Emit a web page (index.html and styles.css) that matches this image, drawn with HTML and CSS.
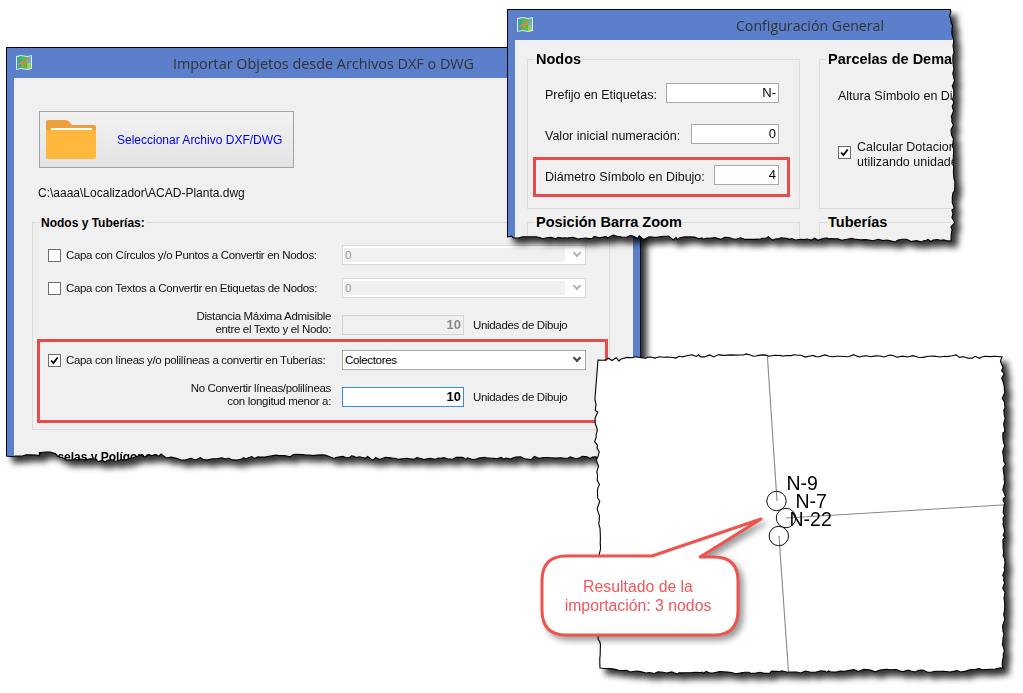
FILE: index.html
```html
<!DOCTYPE html>
<html lang="es">
<head>
    <meta charset="UTF-8">
    <meta name="viewport" content="width=device-width, initial-scale=1.0">
    <title>Importar Objetos desde Archivos DXF o DWG</title>
    <link rel="stylesheet" href="styles.css">
</head>
<body>
    <div class="desktop">

        <!-- ventana importar -->
        <section class="win win-import" id="winImport">
            <div class="win-clip">
                <div class="titlebar">
                    <svg class="app-icon" viewBox="0 0 16 15"><use href="#mapIcon"></use></svg>
                    <span class="title">Importar Objetos desde Archivos DXF o DWG</span>
                </div>
                <div class="client">
                    <div class="file-button">
                        <svg class="folder" viewBox="0 0 50 39">
                            <path d="M2 0H20Q22 0 23.500 2L26 5H48Q50 5 50 7V12H0V2Q0 0 2 0Z" fill="#ee9f3e"/>
                            <rect x="5" y="8" width="41" height="3" fill="#fff"/>
                            <path d="M0 10H50V37Q50 39 48 39H2Q0 39 0 37Z" fill="#ffb73e"/>
                        </svg>
                        <span class="file-button-text">Seleccionar Archivo DXF/DWG</span>
                    </div>
                    <p class="file-path">C:\aaaa\Localizador\ACAD-Planta.dwg</p>

                    <div class="group group-nodes">
                        <h3 class="legend-small">Nodos y Tuberías:</h3>
                        <div class="row row-1">
                            <span class="check"></span>
                            <span class="row-label">Capa con Círculos y/o Puntos a Convertir en Nodos:</span>
                            <div class="combo combo-off"><span>0</span></div>
                        </div>
                        <div class="row row-2">
                            <span class="check"></span>
                            <span class="row-label">Capa con Textos a Convertir en Etiquetas de Nodos:</span>
                            <div class="combo combo-off"><span>0</span></div>
                        </div>
                        <div class="row row-3">
                            <span class="row-label right">Distancia Máxima Admisible<br>entre el Texto y el Nodo:</span>
                            <div class="num num-off">10</div>
                            <span class="unit">Unidades de Dibujo</span>
                        </div>
                        <div class="row row-4">
                            <span class="check check-on">
                                <svg viewBox="0 0 13 13"><path d="M2.500 6.500L5.200 9.500L10.300 3" fill="none" stroke="#000" stroke-width="2.200"/></svg>
                            </span>
                            <span class="row-label">Capa con líneas y/o polilíneas a convertir en Tuberías:</span>
                            <div class="combo"><span>Colectores</span></div>
                        </div>
                        <div class="row row-5">
                            <span class="row-label right">No Convertir líneas/polilíneas<br>con longitud menor a:</span>
                            <div class="num num-focus">10</div>
                            <span class="unit">Unidades de Dibujo</span>
                        </div>
                        <div class="mark mark-pipes"></div>
                    </div>

                    <h3 class="legend-small legend-next">Parcelas y Polígonos:</h3>
                </div>
            </div>
        </section>

        <!-- ventana configuracion -->
        <section class="win win-config" id="winConfig">
            <div class="win-clip">
                <div class="titlebar">
                    <svg class="app-icon" viewBox="0 0 16 15"><use href="#mapIcon"></use></svg>
                    <span class="title">Configuración General</span>
                </div>
                <div class="client client-config">
                    <div class="group group-big">
                        <h3 class="legend-big">Nodos</h3>
                        <div class="field field-1">
                            <span>Prefijo en Etiquetas:</span>
                            <div class="num num-wide">N-</div>
                        </div>
                        <div class="field field-2">
                            <span>Valor inicial numeración:</span>
                            <div class="num num-mid">0</div>
                        </div>
                        <div class="field field-3">
                            <span>Diámetro Símbolo en Dibujo:</span>
                            <div class="num num-short">4</div>
                        </div>
                        <div class="mark mark-diameter"></div>
                    </div>
                    <div class="group group-big">
                        <h3 class="legend-big">Parcelas de Demanda</h3>
                        <div class="field field-height"><span>Altura Símbolo en Dibujo:</span></div>
                        <div class="field-check">
                            <span class="check check-on">
                                <svg viewBox="0 0 13 13"><path d="M2.500 6.500L5.200 9.500L10.300 3" fill="none" stroke="#000" stroke-width="2.200"/></svg>
                            </span>
                            <span>Calcular Dotaciones<br>utilizando unidades</span>
                        </div>
                    </div>
                    <div class="group group-big">
                        <h3 class="legend-big">Posición Barra Zoom</h3>
                    </div>
                    <div class="group group-big">
                        <h3 class="legend-big">Tuberías</h3>
                    </div>
                </div>
            </div>
        </section>

        <!-- dibujo resultante -->
        <section class="win win-drawing" id="winDrawing">
            <div class="win-clip">
                <svg class="drawing" viewBox="590 348 425 335">
                    <g class="pipe">
                        <line x1="767" y1="350" x2="777" y2="501"/>
                        <line x1="786" y1="518" x2="1010" y2="504.500"/>
                        <line x1="779" y1="536" x2="789" y2="680"/>
                    </g>
                    <g class="node">
                        <circle cx="776.500" cy="501" r="9.700"/>
                        <circle cx="786" cy="518" r="9.700"/>
                        <circle cx="778.800" cy="536" r="9.700"/>
                    </g>
                    <text x="786.500" y="490">N-9</text>
                    <text x="795.500" y="508">N-7</text>
                    <text x="789.500" y="526">N-22</text>
                </svg>
            </div>
        </section>

        <div class="callout">
            <svg class="callout-shape" viewBox="535 510 235 132">
                <path d="M566 556H652L761 519L700 557H714Q738 557 738 581V610Q738 635 714 635H566Q542 635 542 610V581Q542 556 566 556Z"/>
            </svg>
            <p class="callout-text">Resultado de la<br>importación: 3 nodos</p>
        </div>
    </div>

    <svg class="defs" width="0" height="0">
        <symbol id="mapIcon" viewBox="0 0 16 15">
            <path d="M0 1L5 0L11 1L16 0V14L11 15L5 14L0 15Z" fill="#d7ecec"/>
            <path d="M1 2L5 1V13L1 14Z" fill="#3aa6a0"/>
            <path d="M5 1L11 2V14L5 13Z" fill="#58b84f"/>
            <path d="M11 2L15 1V8L11 9Z" fill="#57b9c9"/>
            <path d="M11 9L15 8V13L11 14Z" fill="#9ccb5a"/>
            <path d="M2 10L6 7L9 8L11 4L14 5M6 7L7 12" fill="none" stroke="#ef7f3a" stroke-width="1.400"/>
        </symbol>
    </svg>

    <script src="torn.js"></script>
</body>
</html>
```

FILE: styles.css
```css
html, body {
    margin: 0;
    padding: 0;
    background-color: #fff;
}
body {
    font-family: "Liberation Sans", Arial, sans-serif;
    font-size: 12px;
    color: #111;
}
.defs {
    position: absolute;
}
.desktop {
    position: relative;
    width: 1023px;
    height: 693px;
    overflow: hidden;
}

/* ventanas */
.win {
    position: absolute;
    filter: drop-shadow(6px 6px 3px rgba(0, 0, 0, 0.8));
}
.win-import {
    left: 6px;
    top: 47px;
    width: 635px;
    height: 425px;
}
.win-config {
    left: 507px;
    top: 9px;
    width: 460px;
    height: 240px;
}
.win-drawing {
    left: 590px;
    top: 348px;
    width: 425px;
    height: 335px;
}
.win-clip {
    width: 100%;
    height: 100%;
    box-sizing: border-box;
    background-color: #5b7fcb;
    border: 1px solid #0a0a14;
    overflow: hidden;
}
.win-drawing .win-clip {
    background-color: #fff;
    border: 0;
}
.edge {
    position: absolute;
    left: 0;
    top: 0;
    width: 100%;
    height: 100%;
    overflow: visible;
    pointer-events: none;
}
.edge path {
    fill: none;
    stroke: #000;
    stroke-width: 1.100;
}
.titlebar {
    display: flex;
    align-items: center;
    justify-content: center;
    position: relative;
    height: 30px;
}
.app-icon {
    position: absolute;
    left: 9px;
    top: 7px;
    width: 16px;
    height: 15px;
}
.title {
    font-family: "Open Sans", sans-serif;
    font-size: 14.400px;
    color: #333;
}
.win-import .title {
    margin-left: 0;
}
.win-config .title {
    margin-left: 146px;
    font-size: 14.200px;
}
.client {
    margin: 0 7px;
    padding: 33px 0 0 25px;
    height: 430px;
    background-color: #f0f0f0;
}

/* boton archivo */
.file-button {
    display: flex;
    align-items: center;
    box-sizing: border-box;
    width: 255px;
    height: 57px;
    padding: 0 6px;
    border: 1px solid #a3a3a3;
    background: linear-gradient(#f2f2f2, #e4e4e4);
}
.folder {
    width: 50px;
    height: 39px;
    margin-right: 21px;
}
.file-button-text {
    color: #0000f0;
    font-size: 12px;
}
.file-path {
    margin: 18px 0 0 -1px;
    font-size: 12px;
    line-height: 14px;
}

/* grupos */
.group {
    position: relative;
    box-sizing: border-box;
    border: 1px solid #dcdcdc;
}
.group-nodes {
    width: 578px;
    height: 208px;
    margin: 22px 0 0 -7px;
    padding-left: 15px;
}
.legend-small {
    position: absolute;
    top: -7px;
    left: 7px;
    margin: 0;
    padding: 0 1px;
    font-size: 12px;
    line-height: 14px;
    color: #000;
    background-color: #f0f0f0;
}
.legend-next {
    position: static;
    margin: 20px 0 0 -2px;
    display: inline-block;
}
.legend-big {
    position: absolute;
    top: -9px;
    left: 7px;
    margin: 0;
    padding: 0 1px;
    font-size: 14.500px;
    line-height: 17px;
    color: #000;
    background-color: #f0f0f0;
}

/* filas del grupo */
.row {
    display: flex;
    align-items: center;
    height: 20px;
    font-size: 11.500px;
    letter-spacing: -0.33px;
}
.row-1 { margin-top: 22px; }
.row-2 { margin-top: 13px; }
.row-3 { margin-top: 17px; }
.row-4 { margin-top: 15px; }
.row-5 { margin-top: 17px; }
.row-label {
    flex: none;
    width: 276px;
    line-height: 13px;
}
.row-label.right {
    width: 283px;
    margin: 0 11px 5px 0;
    text-align: right;
}
.row .check + .row-label {
    width: 276px;
    margin-left: 5px;
}
.check {
    flex: none;
    box-sizing: border-box;
    display: block;
    width: 13px;
    height: 13px;
    border: 1px solid #6d6d6d;
    background-color: #fff;
}
.check svg {
    display: block;
    width: 11px;
    height: 11px;
}
.combo {
    position: relative;
    box-sizing: border-box;
    display: flex;
    align-items: center;
    width: 244px;
    height: 20px;
    padding-left: 2px;
    border: 1px solid #a9a9a9;
    background-color: #fff;
    color: #000;
}
.combo::after {
    content: '';
    position: absolute;
    right: 5px;
    top: 4px;
    width: 4px;
    height: 4px;
    border-right: 2px solid #444;
    border-bottom: 2px solid #444;
    transform: rotate(45deg);
}
.combo-off {
    border-color: #dadada;
    background: linear-gradient(#f0f0f0, #f0f0f0) 1px 2px / 221px 14px no-repeat #fff;
    color: #9a9a9a;
}
.combo-off::after {
    border-color: #b4b4b4;
}
.num {
    flex: none;
    box-sizing: border-box;
    height: 20px;
    padding-right: 2px;
    border: 1px solid #a9a9a9;
    background-color: #fff;
    font-size: 13px;
    line-height: 18px;
    text-align: right;
    color: #000;
}
.row .num {
    width: 122px;
    font-weight: bold;
    letter-spacing: 0;
}
.row .num-off {
    border-color: #d4d4d4;
    background-color: #f0f0f0;
    color: #8a8a8a;
}
.row .num-focus {
    border-color: #3a8fdd;
}
.unit {
    margin-left: 9px;
}

/* recuadros rojos */
.mark {
    position: absolute;
    box-sizing: border-box;
    border: 3px solid #e84b4b;
}
.mark-pipes {
    left: 4px;
    top: 116px;
    width: 571px;
    height: 84px;
}
.mark-diameter {
    left: 5px;
    top: 97px;
    width: 257px;
    height: 40px;
}

/* configuracion */
.client-config {
    display: grid;
    grid-template-columns: 273px 273px;
    grid-template-rows: 150px 100px;
    column-gap: 19px;
    row-gap: 13px;
    padding: 19px 0 0 12px;
    height: 300px;
}
.group-big {
    border-color: #dcdcdc;
}
.field {
    position: absolute;
    left: 17px;
    right: 20px;
    display: flex;
    align-items: center;
    justify-content: space-between;
    height: 20px;
    font-size: 12.500px;
}
.field > span {
    padding-top: 3px;
}
.field-1 { top: 23px; }
.field-2 { top: 64px; }
.field-3 { top: 105px; }
.field-height {
    left: 18px;
    top: 24px;
    right: auto;
    width: 200px;
}
.num-wide { width: 113px; }
.num-mid { width: 88px; }
.num-short { width: 65px; }
.field .num {
    font-size: 13px;
    padding-right: 2px;
}
.field-check {
    position: absolute;
    left: 18px;
    top: 80px;
    display: flex;
    align-items: center;
    gap: 6px;
    width: 220px;
    font-size: 12.500px;
    line-height: 15px;
}
.field-check .check {
    margin-bottom: 6px;
}

/* dibujo */
.drawing {
    display: block;
    width: 425px;
    height: 335px;
}
.drawing .pipe line {
    stroke: #888;
    stroke-width: 1.100;
}
.drawing .node circle {
    fill: none;
    stroke: #111;
    stroke-width: 1;
}
.drawing text {
    font-family: "Liberation Sans", Arial, sans-serif;
    font-size: 19.500px;
    fill: #000;
}

/* globo */
.callout {
    position: absolute;
    left: 535px;
    top: 510px;
    width: 235px;
    height: 132px;
}
.callout-shape {
    display: block;
    width: 235px;
    height: 132px;
    overflow: visible;
    filter: drop-shadow(4px 4px 3px rgba(0, 0, 0, 0.4));
}
.callout-shape path {
    fill: #fff;
    stroke: #ee5350;
    stroke-width: 3;
    stroke-linejoin: round;
}
.callout-text {
    position: absolute;
    left: 6px;
    top: 68px;
    width: 194px;
    margin: 0;
    font-size: 15.800px;
    line-height: 18.500px;
    text-align: center;
    color: #f0565a;
}
```

FILE: torn.js
```js
// bordes rasgados de las capturas: puntos de control en px relativos a cada ventana
var seed = 7;
function rnd() {
    seed = (seed * 16807) % 2147483647;
    return seed / 2147483647;
}

function tear(ctrl) {
    var out = [ctrl[0]];
    for (var i = 0; i < ctrl.length - 1; i++) {
        var a = ctrl[i], b = ctrl[i + 1];
        var dx = b[0] - a[0], dy = b[1] - a[1];
        var len = Math.sqrt(dx * dx + dy * dy);
        var pos = 2 + rnd() * 3;
        while (pos < len - 2) {
            var off = (rnd() - 0.5) * 2.6;
            if (rnd() < 0.12) off *= 1.8;
            var t = pos / len;
            out.push([a[0] + dx * t - dy / len * off, a[1] + dy * t + dx / len * off]);
            pos += 1.5 + rnd() * 4.5;
        }
        out.push(b);
    }
    return out;
}

function apply(id, fixedPts, tornCtrl, closeEdge) {
    var win = document.getElementById(id);
    var torn = tear(tornCtrl);
    var all = fixedPts.concat(torn);
    var poly = all.map(function (p) { return p[0].toFixed(1) + 'px ' + p[1].toFixed(1) + 'px'; }).join(',');
    win.querySelector('.win-clip').style.clipPath = 'polygon(' + poly + ')';

    var d = 'M' + torn.map(function (p) { return p[0].toFixed(1) + ' ' + p[1].toFixed(1); }).join('L');
    if (closeEdge) d += 'Z';
    var svg = document.createElementNS('http://www.w3.org/2000/svg', 'svg');
    svg.setAttribute('class', 'edge');
    var path = document.createElementNS('http://www.w3.org/2000/svg', 'path');
    path.setAttribute('d', d);
    svg.appendChild(path);
    win.appendChild(svg);
}

apply('winImport', [[0, 0], [635, 0]], [
    [635, 408], [594, 411], [500, 411], [394, 412], [300, 408], [220, 412], [175, 413],
    [150, 408], [135, 408], [120, 413], [60, 413], [44, 405], [30, 408], [14, 409], [0, 409]
]);

apply('winConfig', [[0, 0]], [
    [443, 0], [445, 20], [447, 60], [445, 110], [447, 170], [446, 205], [444, 232],
    [380, 231], [300, 230], [200, 229], [120, 228], [60, 229], [0, 228]
]);

apply('winDrawing', [], [
    [8, 12], [60, 9], [150, 7], [220, 8], [290, 8], [350, 9], [412, 9],
    [415, 60], [413, 120], [414, 180], [414, 250], [413, 320],
    [360, 324], [290, 322], [200, 324], [120, 325], [40, 324], [10, 320], [8, 250], [10, 180], [7, 100], [5, 50]
], true);
```
